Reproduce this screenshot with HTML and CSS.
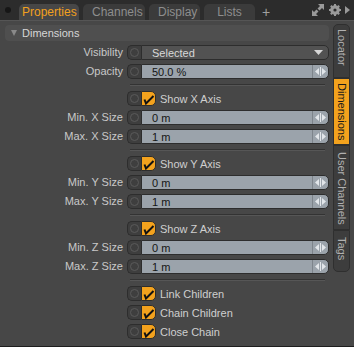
FILE: index.html
```
<!DOCTYPE html>
<html lang="en">
  <head>
    <meta charset="UTF-8" />
    <title>Properties</title>
    <link rel="stylesheet" href="styles.css">
  </head>

  <body>
    <div class="panel">
      <div class="topbar">
        <span class="dot"></span>
        <div class="tabs">
          <div class="tab active">Properties</div>
          <div class="tab">Channels</div>
          <div class="tab">Display</div>
          <div class="tab">Lists</div>
          <div class="add">+</div>
        </div>
        <div class="tools">
          <svg width="14" height="14" viewBox="0 0 14 14">
            <path d="M7 1h6v6l-2-2-2.5 2.5-2-2L9 3z" fill="#9a9a9a" />
            <path d="M1 13V7l2 2 2.5-2.5 2 2L5 11l2 2z" fill="#9a9a9a" />
          </svg>
          <svg width="12" height="12" viewBox="0 0 12 12">
            <circle cx="6" cy="6" r="3.6" fill="none" stroke="#9a9a9a" stroke-width="2.4" />
            <path d="M6 0v12M0 6h12M1.8 1.8l8.4 8.4M10.2 1.8l-8.4 8.4" stroke="#9a9a9a" stroke-width="2" />
            <circle cx="6" cy="6" r="1.6" fill="#2c2c2c" />
          </svg>
          <svg width="5" height="8" viewBox="0 0 5 8">
            <path d="M0 0l5 4-5 4z" fill="#9a9a9a" />
          </svg>
        </div>
      </div>

      <div class="body">
        <div class="content">
          <div class="section-head">
            <span class="arrow"></span>
            Dimensions
          </div>

          <div class="rows">
            <div class="row">
              <div class="label">Visibility</div>
              <div class="ctrl">
                <span class="knob"><i></i></span>
                <div class="field dark">
                  <span>Selected</span>
                  <svg width="9" height="5" viewBox="0 0 9 5"><path d="M0 0h9L4.5 5z" fill="#d6d6d6" /></svg>
                </div>
              </div>
            </div>
            <div class="row">
              <div class="label">Opacity</div>
              <div class="ctrl">
                <span class="knob"><i></i></span>
                <div class="field">
                  <span>50.0 %</span>
                  <span class="spin"><svg width="11" height="9" viewBox="0 0 11 9"><path d="M0 4.5L4 1v7zM11 4.5L7 1v7z" fill="#e2e6ea" /><rect x="5" y="0" width="1" height="9" fill="#e2e6ea" /></svg></span>
                </div>
              </div>
            </div>

            <div class="sep"></div>

            <div class="row">
              <div class="label"></div>
              <div class="ctrl check">
                <span class="knob"><i></i></span>
                <span class="box"><svg width="12" height="12" viewBox="0 0 12 12"><path d="M1.5 6.5L3 10.5 10.5 3" fill="none" stroke="#111" stroke-width="2" /></svg></span>
                <span class="text">Show X Axis</span>
              </div>
            </div>
            <div class="row">
              <div class="label">Min. X Size</div>
              <div class="ctrl">
                <span class="knob"><i></i></span>
                <div class="field">
                  <span>0 m</span>
                  <span class="spin"><svg width="11" height="9" viewBox="0 0 11 9"><path d="M0 4.5L4 1v7zM11 4.5L7 1v7z" fill="#e2e6ea" /><rect x="5" y="0" width="1" height="9" fill="#e2e6ea" /></svg></span>
                </div>
              </div>
            </div>
            <div class="row">
              <div class="label">Max. X Size</div>
              <div class="ctrl">
                <span class="knob"><i></i></span>
                <div class="field">
                  <span>1 m</span>
                  <span class="spin"><svg width="11" height="9" viewBox="0 0 11 9"><path d="M0 4.5L4 1v7zM11 4.5L7 1v7z" fill="#e2e6ea" /><rect x="5" y="0" width="1" height="9" fill="#e2e6ea" /></svg></span>
                </div>
              </div>
            </div>

            <div class="sep"></div>

            <div class="row">
              <div class="label"></div>
              <div class="ctrl check">
                <span class="knob"><i></i></span>
                <span class="box"><svg width="12" height="12" viewBox="0 0 12 12"><path d="M1.5 6.5L3 10.5 10.5 3" fill="none" stroke="#111" stroke-width="2" /></svg></span>
                <span class="text">Show Y Axis</span>
              </div>
            </div>
            <div class="row">
              <div class="label">Min. Y Size</div>
              <div class="ctrl">
                <span class="knob"><i></i></span>
                <div class="field">
                  <span>0 m</span>
                  <span class="spin"><svg width="11" height="9" viewBox="0 0 11 9"><path d="M0 4.5L4 1v7zM11 4.5L7 1v7z" fill="#e2e6ea" /><rect x="5" y="0" width="1" height="9" fill="#e2e6ea" /></svg></span>
                </div>
              </div>
            </div>
            <div class="row">
              <div class="label">Max. Y Size</div>
              <div class="ctrl">
                <span class="knob"><i></i></span>
                <div class="field">
                  <span>1 m</span>
                  <span class="spin"><svg width="11" height="9" viewBox="0 0 11 9"><path d="M0 4.5L4 1v7zM11 4.5L7 1v7z" fill="#e2e6ea" /><rect x="5" y="0" width="1" height="9" fill="#e2e6ea" /></svg></span>
                </div>
              </div>
            </div>

            <div class="sep"></div>

            <div class="row">
              <div class="label"></div>
              <div class="ctrl check">
                <span class="knob"><i></i></span>
                <span class="box"><svg width="12" height="12" viewBox="0 0 12 12"><path d="M1.5 6.5L3 10.5 10.5 3" fill="none" stroke="#111" stroke-width="2" /></svg></span>
                <span class="text">Show Z Axis</span>
              </div>
            </div>
            <div class="row">
              <div class="label">Min. Z Size</div>
              <div class="ctrl">
                <span class="knob"><i></i></span>
                <div class="field">
                  <span>0 m</span>
                  <span class="spin"><svg width="11" height="9" viewBox="0 0 11 9"><path d="M0 4.5L4 1v7zM11 4.5L7 1v7z" fill="#e2e6ea" /><rect x="5" y="0" width="1" height="9" fill="#e2e6ea" /></svg></span>
                </div>
              </div>
            </div>
            <div class="row">
              <div class="label">Max. Z Size</div>
              <div class="ctrl">
                <span class="knob"><i></i></span>
                <div class="field">
                  <span>1 m</span>
                  <span class="spin"><svg width="11" height="9" viewBox="0 0 11 9"><path d="M0 4.5L4 1v7zM11 4.5L7 1v7z" fill="#e2e6ea" /><rect x="5" y="0" width="1" height="9" fill="#e2e6ea" /></svg></span>
                </div>
              </div>
            </div>

            <div class="sep"></div>

            <div class="row">
              <div class="label"></div>
              <div class="ctrl check">
                <span class="knob"><i></i></span>
                <span class="box"><svg width="12" height="12" viewBox="0 0 12 12"><path d="M1.5 6.5L3 10.5 10.5 3" fill="none" stroke="#111" stroke-width="2" /></svg></span>
                <span class="text">Link Children</span>
              </div>
            </div>
            <div class="row">
              <div class="label"></div>
              <div class="ctrl check">
                <span class="knob"><i></i></span>
                <span class="box"><svg width="12" height="12" viewBox="0 0 12 12"><path d="M1.5 6.5L3 10.5 10.5 3" fill="none" stroke="#111" stroke-width="2" /></svg></span>
                <span class="text">Chain Children</span>
              </div>
            </div>
            <div class="row">
              <div class="label"></div>
              <div class="ctrl check">
                <span class="knob"><i></i></span>
                <span class="box"><svg width="12" height="12" viewBox="0 0 12 12"><path d="M1.5 6.5L3 10.5 10.5 3" fill="none" stroke="#111" stroke-width="2" /></svg></span>
                <span class="text">Close Chain</span>
              </div>
            </div>
          </div>
        </div>

        <div class="sidetabs">
          <div class="vtab locator">Locator</div>
          <div class="vtab active dims">Dimensions</div>
          <div class="vtab user">User Channels</div>
          <div class="vtab tags">Tags</div>
        </div>
      </div>
    </div>
  </body>
</html>
```

FILE: styles.css
```
html,
body {
  padding: 0;
  margin: 0;
}
body {
  width: 354px;
  height: 347px;
  overflow: hidden;
  background: #2c2c2c;
  font-family: "Liberation Sans", Arial, sans-serif;
  font-size: 11px;
  color: #cfcfcf;
}
.panel {
  height: 346px;
  display: flex;
  flex-direction: column;
  border-bottom: 1px solid #1e1e1e;
}

/* top tab strip */
.topbar {
  height: 20px;
  display: flex;
  align-items: flex-end;
  background: #2c2c2c;
  .dot {
    width: 6px;
    height: 6px;
    border-radius: 50%;
    background: #161616;
    margin: 0 8px 7px 5px;
  }
  .tabs {
    display: flex;
    align-items: flex-end;
    gap: 4px;
  }
  .tab {
    height: 16px;
    line-height: 17px;
    padding: 0 9px;
    border-radius: 5px 5px 0 0;
    background: #3b3b3b;
    color: #8e8e8e;
    font-size: 12px;
  }
  .tab.active {
    background: #474747;
    color: #f2a01e;
    padding: 0 3px;
    width: 54px;
  }
  .add {
    color: #a0a0a0;
    font-size: 14px;
    line-height: 17px;
    margin-left: 3px;
    height: 16px;
  }
  .tools {
    margin-left: auto;
    display: flex;
    align-items: center;
    gap: 4px;
    height: 20px;
    padding-right: 4px;
  }
}
.tab:nth-child(2) {
  width: 44px;
}
.tab:nth-child(3) {
  width: 33px;
}
.tab:nth-child(4) {
  width: 33px;
  text-align: center;
}

.body {
  flex: 1;
  display: flex;
  background: #474747;
  border-top: 1px solid #555;
}
.content {
  width: 331px;
  padding: 4px 2px 0 5px;
  box-sizing: border-box;
}
.section-head {
  height: 16px;
  display: flex;
  align-items: center;
  gap: 5px;
  padding-left: 6px;
  background: #4f4f4f;
  border-radius: 4px;
  color: #d6d6d6;
  .arrow {
    width: 0;
    height: 0;
    border-left: 3.5px solid transparent;
    border-right: 3.5px solid transparent;
    border-top: 6px solid #8a8a8a;
  }
}

.rows {
  display: flex;
  flex-direction: column;
  gap: 4px;
  margin-top: 4px;
}
.row {
  display: grid;
  grid-template-columns: 118px 202px;
  column-gap: 4px;
  height: 15px;
  .label {
    text-align: right;
    line-height: 15px;
    color: #c9c9c9;
  }
}
.sep {
  margin-left: 125px;
  margin-right: 4px;
  height: 0;
  border-top: 1px solid #333;
  border-bottom: 1px solid #565656;
  margin-top: 1px;
  margin-bottom: 1px;
}

.ctrl {
  display: flex;
  height: 15px;
}
.knob {
  width: 14px;
  height: 15px;
  box-sizing: border-box;
  background: #3e3e3e;
  border: 1px solid #2d2d2d;
  border-right: none;
  border-radius: 5px 0 0 5px;
  display: flex;
  align-items: center;
  justify-content: center;
  i {
    width: 9px;
    height: 9px;
    border-radius: 50%;
    border: 1px solid #5a5a5a;
    box-sizing: border-box;
  }
}
.field {
  flex: 1;
  display: flex;
  align-items: center;
  height: 15px;
  box-sizing: border-box;
  background: #9ba3ab;
  border: 1px solid #2d2d2d;
  border-radius: 0 5px 5px 0;
  color: #151515;
  span:first-child {
    flex: 1;
    text-align: left;
    padding-left: 10px;
  }
  .spin {
    width: 15px;
    height: 13px;
    border-left: 1px solid #7d848b;
    display: flex;
    align-items: center;
    justify-content: center;
    padding: 0;
  }
}
.field.dark {
  background: #525252;
  color: #d8d8d8;
  svg {
    margin-right: 5px;
  }
}
.check {
  align-items: center;
  .box {
    width: 15px;
    height: 15px;
    box-sizing: border-box;
    background: #f3a21d;
    border: 1px solid #2d2d2d;
    border-radius: 0 5px 5px 0;
    display: flex;
    align-items: center;
    justify-content: center;
  }
  .text {
    margin-left: 4px;
    color: #cfcfcf;
  }
}

/* vertical tabs on the right */
.sidetabs {
  width: 17px;
  margin-left: 2px;
  padding-top: 3px;
  display: flex;
  flex-direction: column;
  .vtab {
    writing-mode: vertical-rl;
    box-sizing: border-box;
    width: 17px;
    background: #3d3d3d;
    border: 1px solid #2f2f2f;
    color: #b0b0b0;
    line-height: 15px;
    padding-top: 4px;
  }
  .locator {
    height: 54px;
    border-radius: 5px 5px 0 0;
  }
  .dims {
    height: 67px;
    background: #f3a21d;
    color: #1a1a1a;
  }
  .user {
    height: 85px;
    padding-top: 6px;
  }
  .tags {
    height: 42px;
    border-radius: 0 0 5px 5px;
    padding-top: 6px;
  }
}
```
